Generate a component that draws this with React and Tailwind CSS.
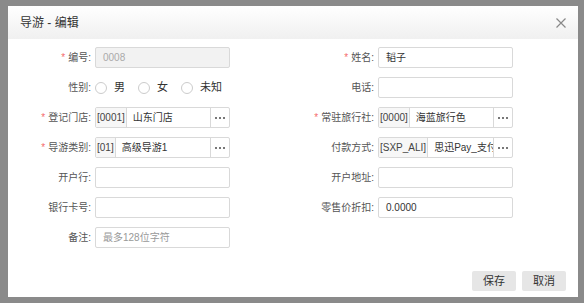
const font = { fontFamily: '"Liberation Sans", "Noto Sans CJK SC", sans-serif' }

function Label({ text, required, width }) {
  return (
    <div className={`${width} flex items-center justify-end text-[10px] text-[#555] whitespace-nowrap`}>
      {required && <span className="text-[#f56c6c] mr-[3px] text-[10px] leading-none">*</span>}
      {text}:
    </div>
  )
}

function Input({ value, placeholder, disabled }) {
  return (
    <div
      className={`w-[135px] h-[21px] border border-[#d9d9d9] rounded-[2px] flex items-center pl-[7px] text-[10px] ${
        disabled ? 'bg-[#f2f2f2] text-[#aaa]' : 'bg-white text-[#333]'
      }`}
    >
      {value ? value : <span className="text-[#999]">{placeholder}</span>}
    </div>
  )
}

function Lookup({ code, name }) {
  return (
    <div className="w-[135px] h-[21px] border border-[#d9d9d9] rounded-[2px] flex items-stretch text-[10px] text-[#333] overflow-hidden">
      <div className="bg-[#f7f7f7] border-r border-[#d9d9d9] px-[1px] flex items-center whitespace-nowrap text-[#444]">{code}</div>
      <div className="flex-1 min-w-0 pl-[6px] flex items-center whitespace-nowrap overflow-hidden">{name}</div>
      <div className="w-[19px] border-l border-[#d9d9d9] flex items-center justify-center gap-[2px]">
        <span className="w-[2px] h-[2px] bg-[#777]" />
        <span className="w-[2px] h-[2px] bg-[#777]" />
        <span className="w-[2px] h-[2px] bg-[#777]" />
      </div>
    </div>
  )
}

function Radio({ label }) {
  return (
    <div className="flex items-center gap-[7px] text-[11px] text-[#333]">
      <span className="w-[12px] h-[12px] rounded-full border border-[#ccc] bg-white" />
      {label}
    </div>
  )
}

function Left({ label, required, children }) {
  return (
    <div className="w-[285px] flex items-center gap-[4px]">
      <Label text={label} required={required} width="w-[83px]" />
      {children}
    </div>
  )
}

function Right({ label, required, children }) {
  return (
    <div className="flex items-center gap-[4px]">
      <Label text={label} required={required} width="w-[81px]" />
      {children}
    </div>
  )
}

export default function App() {
  return (
    <div className="w-[584px] h-[303px] bg-[#8a8a8a] pt-[6px] pl-[8px]" style={font}>
      <div className="w-[570px] h-[291px] bg-white flex flex-col">
        {/* Header */}
        <div className="h-[33px] px-[12px] flex items-center justify-between bg-gradient-to-b from-white to-[#f0f0f0]">
          <span className="text-[12px] text-[#333]">导游 - 编辑</span>
          <svg width="10" height="10" viewBox="0 0 10 10" className="mt-[1px]">
            <path d="M0.5 0.5 L9.5 9.5 M9.5 0.5 L0.5 9.5" stroke="#888" strokeWidth="1.2" />
          </svg>
        </div>

        {/* Form */}
        <div className="flex-1 pt-[8px] flex flex-col gap-[9px]">
          <div className="flex h-[21px]">
            <Left label="编号" required><Input value="0008" disabled /></Left>
            <Right label="姓名" required><Input value="韬子" /></Right>
          </div>
          <div className="flex h-[21px]">
            <Left label="性别">
              <div className="flex items-center gap-[13px]">
                <Radio label="男" />
                <Radio label="女" />
                <Radio label="未知" />
              </div>
            </Left>
            <Right label="电话"><Input /></Right>
          </div>
          <div className="flex h-[21px]">
            <Left label="登记门店" required><Lookup code="[0001]" name="山东门店" /></Left>
            <Right label="常驻旅行社" required><Lookup code="[0000]" name="海蓝旅行色" /></Right>
          </div>
          <div className="flex h-[21px]">
            <Left label="导游类别" required><Lookup code="[01]" name="高级导游1" /></Left>
            <Right label="付款方式"><Lookup code="[SXP_ALI]" name="思迅Pay_支付宝" /></Right>
          </div>
          <div className="flex h-[21px]">
            <Left label="开户行"><Input /></Left>
            <Right label="开户地址"><Input /></Right>
          </div>
          <div className="flex h-[21px]">
            <Left label="银行卡号"><Input /></Left>
            <Right label="零售价折扣"><Input value="0.0000" /></Right>
          </div>
          <div className="flex h-[21px]">
            <Left label="备注"><Input placeholder="最多128位字符" /></Left>
          </div>
        </div>

        {/* Footer */}
        <div className="flex justify-end gap-[6px] pr-[12px] pb-[6px]">
          <button className="w-[44px] h-[20px] bg-[#e6e6e6] rounded-[2px] text-[11px] text-[#333]">保存</button>
          <button className="w-[44px] h-[20px] bg-[#e6e6e6] rounded-[2px] text-[11px] text-[#333]">取消</button>
        </div>
      </div>
    </div>
  )
}
